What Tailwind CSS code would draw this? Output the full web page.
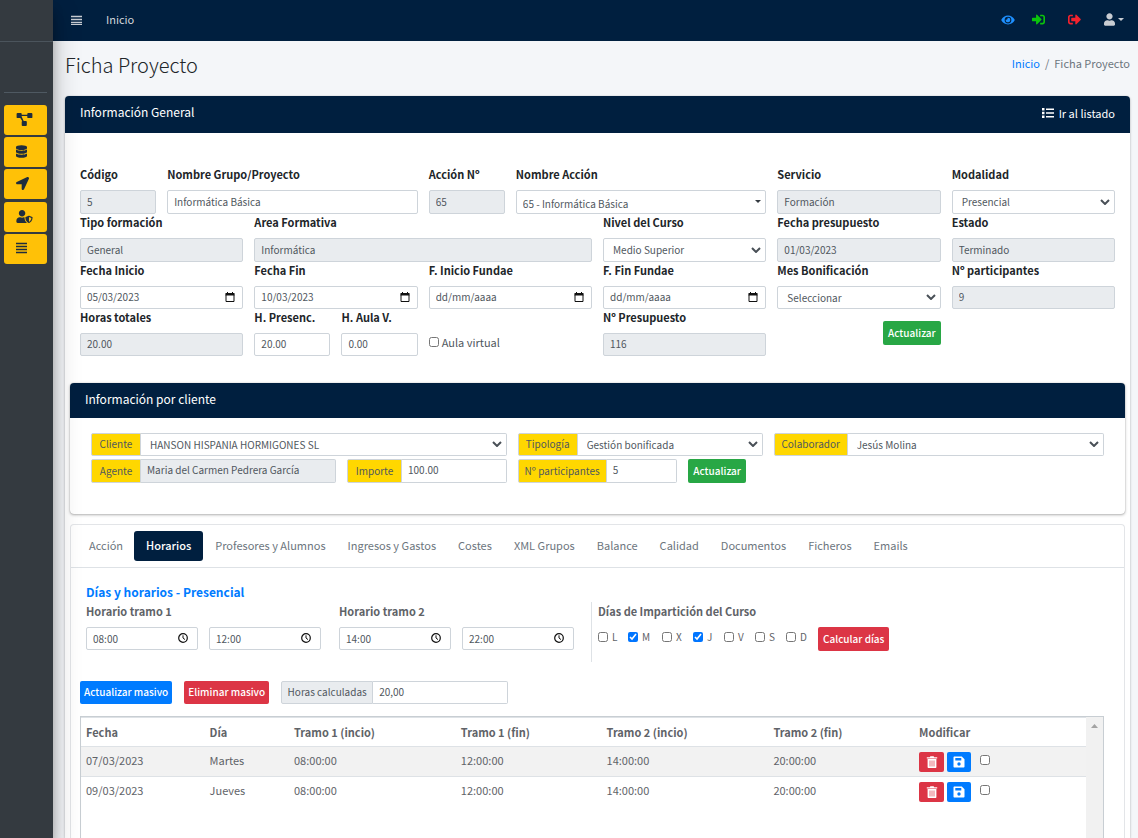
<!DOCTYPE html>
<html lang="es">
<head>
<meta charset="utf-8">
<meta name="viewport" content="width=device-width, initial-scale=1">
<title>Ficha Proyecto</title>
<script src="https://cdn.jsdelivr.net/npm/@tailwindcss/browser@4"></script>
</head>
<body class="flex h-screen overflow-hidden bg-[#f4f6f9] font-['Noto_Sans_CJK_SC','Noto_Sans',sans-serif] text-[11px] leading-[18px] text-[#212529]">

<svg class="hidden" aria-hidden="true">
  <symbol id="chevron" viewBox="0 0 10 6"><path d="M1 1l4 4 4-4" fill="none" stroke="#495057" stroke-width="2"/></symbol>
  <symbol id="calendar" viewBox="0 0 10 10"><path d="M1 2.500h8v7H1z" fill="none" stroke="#111" stroke-width="1"/><path d="M.5 1h9v2.500h-9zM2 0h1v2H2zM7 0h1v2H7z" fill="#111"/></symbol>
  <symbol id="clock" viewBox="0 0 10 10"><circle cx="5" cy="5" r="4.300" fill="none" stroke="#111" stroke-width="1.200"/><path d="M5 2.300V5l2 1.600" fill="none" stroke="#111" stroke-width="1"/></symbol>
  <symbol id="trash" viewBox="0 0 12 12"><path d="M.8 1.200h3L4.400.3h3.200l.6.9h3v1.300H.8z" fill="#fff"/><path d="M1.600 3h8.800v8c0 .6-.4 1-1 1H2.600c-.6 0-1-.4-1-1z" fill="#fff"/><path d="M4 4.500v6M6 4.500v6M8 4.500v6" stroke="#dc3545" stroke-width=".7"/></symbol>
  <symbol id="save" viewBox="0 0 12 12"><path fill="#fff" fill-rule="evenodd" d="M1.500.5h7.300l2.700 2.700v7.300c0 .6-.4 1-1 1h-9c-.6 0-1-.4-1-1v-9c0-.6.4-1 1-1zM2.300 2v2.600h6V2zM6 6.300a1.700 1.700 0 1 0 0 3.400 1.700 1.700 0 0 0 0-3.400z"/></symbol>
</svg>

<aside class="z-20 flex w-[53px] shrink-0 flex-col bg-[#343a40] shadow-[0_14px_28px_rgba(0,0,0,0.25),0_10px_10px_rgba(0,0,0,0.22)]">
  <div class="h-[42px] shrink-0 border-b border-[#4b545c]"></div>
  <div class="mr-[6px] ml-1 h-[51px] shrink-0 border-b border-[#4f5962]"></div>
  <nav class="mt-3 mr-[6px] ml-1 flex flex-col gap-[2px]" aria-label="Menú lateral">
    <button aria-label="Procesos" class="flex h-[30px] items-center rounded-[3px] bg-[#ffc107] pb-[2px] pl-3">
      <svg class="h-[13px] w-[17px]" viewBox="0 0 17 14" fill="#1f2d3d"><path d="M1 0h3.500a1 1 0 0 1 1 1v.8h6V1a1 1 0 0 1 1-1H16a1 1 0 0 1 1 1v3.500a1 1 0 0 1-1 1h-3.500a1 1 0 0 1-1-1v-1.300h-6v.9L7.600 8.500H10a1 1 0 0 1 1 1V13a1 1 0 0 1-1 1H6.500a1 1 0 0 1-1-1V9.500l.5-.9L4 5.500H1a1 1 0 0 1-1-1V1a1 1 0 0 1 1-1z"/></svg>
    </button>
    <button aria-label="Datos" class="flex h-[30px] items-center rounded-[3px] bg-[#ffc107] pb-[2px] pl-3">
      <svg class="h-[13px] w-[11px]" viewBox="0 0 448 512" fill="#1f2d3d"><path d="M448 73.143v45.714C448 159.143 347.667 192 224 192S0 159.143 0 118.857V73.143C0 32.857 100.333 0 224 0s224 32.857 224 73.143zM448 176v102.857C448 319.143 347.667 352 224 352S0 319.143 0 278.857V176c48.125 33.143 136.208 48.572 224 48.572S399.874 209.143 448 176zm0 160v102.857C448 479.143 347.667 512 224 512S0 479.143 0 438.857V336c48.125 33.143 136.208 48.572 224 48.572S399.874 369.143 448 336z"/></svg>
    </button>
    <button aria-label="Ubicación" class="flex h-[30px] items-center rounded-[3px] bg-[#ffc107] pb-[2px] pl-3">
      <svg class="size-[13px]" viewBox="0 0 512 512" fill="#1f2d3d"><path d="M444.520 3.520L28.740 195.420c-47.970 22.390-31.980 92.750 19.190 92.750h175.910v175.910c0 51.170 70.360 67.170 92.750 19.190l191.900-415.780c15.990-38.390-25.590-79.970-63.970-63.970z"/></svg>
    </button>
    <button aria-label="Usuarios" class="mt-px flex h-[30px] items-center rounded-[3px] bg-[#ffc107] pb-[2px] pl-3">
      <svg class="h-[13px] w-[17px]" viewBox="0 0 640 512" fill="#1f2d3d"><path d="M622.300 271.100l-115.200-45c-4.100-1.600-12.600-3.700-22.200 0l-115.200 45c-10.700 4.200-17.700 14-17.700 24.900 0 111.600 68.700 188.800 132.900 213.900 9.600 3.700 18 1.600 22.200 0C558.400 489.900 640 420.500 640 296c0-10.900-7-20.700-17.700-24.900zM496 462.400V273.300l95.500 37.300c-5.600 87.100-60.900 135.400-95.500 151.800zM224 256c70.700 0 128-57.300 128-128S294.700 0 224 0 96 57.300 96 128s57.300 128 128 128zm96 40c0-2.500.8-4.800 1.100-7.200-2.500-.1-4.900-.8-7.500-.8h-16.700c-22.200 10.200-46.900 16-72.900 16s-50.600-5.800-72.900-16h-16.700C60.200 288 0 348.200 0 422.400V464c0 26.500 21.500 48 48 48h352c6.800 0 13.300-1.500 19.200-4-54-42.900-99.200-116.700-99.200-212z"/></svg>
    </button>
    <button aria-label="Listado" class="flex h-[30px] items-center rounded-[3px] bg-[#ffc107] pb-[2px] pl-3">
      <svg class="h-[13px] w-[11px]" viewBox="0 0 11 13" stroke="#1f2d3d" stroke-width="1.300"><path d="M0 1.500h11M0 4.500h11M0 7.500h11M0 10.500h11"/></svg>
    </button>
  </nav>
</aside>

<div class="flex min-w-0 flex-1 flex-col">
  <header class="flex h-[41px] shrink-0 items-center bg-[#001f3f] pr-[14px] pb-[2px] pl-[18px] text-[#c2c7d0]">
    <button aria-label="Menú"><svg class="h-[10px] w-[11px]" viewBox="0 0 11 10" stroke="#c8ccd2" stroke-width="1.600"><path d="M0 1.500h11M0 4.500h11M0 7.500h11"/><path d="M0 9.500h11" stroke-width="1"/></svg></button>
    <a href="#" class="mb-px ml-6 text-[#d3d6db]">Inicio</a>
    <div class="ml-auto flex items-center">
      <a href="#" aria-label="Ver"><svg class="h-3 w-[14px]" viewBox="0 0 576 512" fill="#1e90ff"><path d="M572.520 241.400C518.290 135.590 410.930 64 288 64S57.680 135.640 3.480 241.410a32.350 32.350 0 0 0 0 29.190C57.710 376.410 165.070 448 288 448s230.320-71.640 284.520-177.410a32.350 32.350 0 0 0 0-29.190zM288 400a144 144 0 1 1 144-144 143.930 143.930 0 0 1-144 144zm0-240a95.310 95.310 0 0 0-25.310 3.790 47.850 47.850 0 0 1-66.900 66.900A95.780 95.780 0 1 0 288 160z"/></svg></a>
      <a href="#" aria-label="Entrar" class="ml-[17px]"><svg class="size-[13px]" viewBox="0 0 512 512" fill="#0bc40b"><path d="M416 448h-84c-6.600 0-12-5.400-12-12v-40c0-6.600 5.400-12 12-12h84c17.700 0 32-14.300 32-32V160c0-17.700-14.300-32-32-32h-84c-6.600 0-12-5.400-12-12V76c0-6.600 5.400-12 12-12h84c53 0 96 43 96 96v192c0 53-43 96-96 96zm-47-209L201 71c-15-15-41-4.500-41 17v96H24c-13.300 0-24 10.700-24 24v96c0 13.300 10.700 24 24 24h136v96c0 21.500 26 32 41 17l168-168c9.300-9.400 9.300-24.600 0-34z"/></svg></a>
      <a href="#" aria-label="Salir" class="ml-[23px]"><svg class="size-[13px]" viewBox="0 0 512 512" fill="#f5222d"><path d="M497 273L329 441c-15 15-41 4.500-41-17v-96H152c-13.300 0-24-10.700-24-24v-96c0-13.300 10.700-24 24-24h136V88c0-21.400 25.900-32 41-17l168 168c9.300 9.400 9.300 24.600 0 34zM192 436v-40c0-6.600-5.400-12-12-12H96c-17.700 0-32-14.300-32-32V160c0-17.700 14.300-32 32-32h84c6.600 0 12-5.400 12-12V76c0-6.600-5.400-12-12-12H96c-53 0-96 43-96 96v192c0 53 43 96 96 96h84c6.600 0 12-5.400 12-12z"/></svg></a>
      <button aria-label="Usuario" class="ml-[23px] flex items-center gap-[3px]">
        <svg class="h-[13px] w-[11px]" viewBox="0 0 448 512" fill="#c8ccd2"><path d="M224 256c70.700 0 128-57.300 128-128S294.700 0 224 0 96 57.300 96 128s57.300 128 128 128zm89.600 32h-16.700c-22.200 10.200-46.900 16-72.900 16s-50.600-5.800-72.900-16h-16.700C60.200 288 0 348.200 0 422.400V464c0 26.500 21.500 48 48 48h352c26.500 0 48-21.500 48-48v-41.600c0-74.200-60.200-134.400-134.400-134.400z"/></svg>
        <svg class="h-[3px] w-[6px]" viewBox="0 0 6 3" fill="#c8ccd2"><path d="M0 0h6L3 3z"/></svg>
      </button>
    </div>
  </header>

  <main class="flex min-h-0 flex-1 flex-col pr-2 pl-3">
    <div class="flex h-[55px] shrink-0 justify-between pt-[11px]">
      <h1 class="text-[20px] leading-[26px] font-light">Ficha Proyecto</h1>
      <nav class="flex gap-[5px] pt-[2px] text-[#6c757d]" aria-label="Ruta"><a href="#" class="text-[#007bff]">Inicio</a><span>/</span><span>Ficha Proyecto</span></nav>
    </div>

    <section class="flex min-h-0 flex-1 flex-col rounded-t bg-white shadow-[0_0_1px_rgba(0,0,0,0.3),0_1px_3px_rgba(0,0,0,0.2)]">
      <div class="flex h-[37px] shrink-0 items-center justify-between rounded-t bg-[#001f3f] px-[15px] pb-1 text-white">
        <h2 class="pb-px text-[12px]">Información General</h2>
        <a href="#" class="flex items-center gap-[5px]"><svg class="h-[10px] w-3" viewBox="0 0 12 10" fill="#fff"><path d="M0 0h2.500v2.500H0zM0 3.800h2.500v2.500H0zM0 7.500h2.500V10H0zM4 .5h8V2H4zM4 4.300h8v1.500H4zM4 8h8v1.500H4z"/></svg>Ir al listado</a>
      </div>

      <form class="grid shrink-0 grid-cols-12 gap-x-[11px] px-[15px] pt-[33px] text-[10px] text-[#50575e] [&_input]:pb-[2px]">
        <div class="col-span-1"><label for="cod" class="mb-[7px] block text-[11px] leading-[17px] font-bold whitespace-nowrap text-[#212529]">Código</label><input id="cod" value="5" readonly class="block h-6 w-full rounded-[2px] border border-[#ced4da] bg-[#e9ecef] px-[6px]"></div>
        <div class="col-span-3"><label for="nom" class="mb-[7px] block text-[11px] leading-[17px] font-bold whitespace-nowrap text-[#212529]">Nombre Grupo/Proyecto</label><input id="nom" value="Informática Básica" class="block h-6 w-full rounded-[2px] border border-[#ced4da] bg-white px-[6px]"></div>
        <div class="col-span-1"><label for="acn" class="mb-[7px] block text-[11px] leading-[17px] font-bold whitespace-nowrap text-[#212529]">Acción Nº</label><input id="acn" value="65" readonly class="block h-6 w-full rounded-[2px] border border-[#ced4da] bg-[#e9ecef] px-[6px]"></div>
        <div class="col-span-3"><label for="nac" class="mb-[7px] block text-[11px] leading-[17px] font-bold whitespace-nowrap text-[#212529]">Nombre Acción</label><div class="relative"><select id="nac" class="block h-6 w-full appearance-none rounded-[2px] border border-[#ced4da] bg-white px-[6px] pt-[3px]"><option>65 - Informática Básica</option></select><svg class="pointer-events-none absolute top-[10px] right-[5px] h-[3px] w-[6px]" viewBox="0 0 6 3" fill="#343a40"><path d="M0 0h6L3 3z"/></svg></div></div>
        <div class="col-span-2"><label for="ser" class="mb-[7px] block text-[11px] leading-[17px] font-bold whitespace-nowrap text-[#212529]">Servicio</label><input id="ser" value="Formación" readonly class="block h-6 w-full rounded-[2px] border border-[#ced4da] bg-[#e9ecef] px-[6px]"></div>
        <div class="col-span-2"><label for="mod" class="mb-[7px] block text-[11px] leading-[17px] font-bold whitespace-nowrap text-[#212529]">Modalidad</label><div class="relative"><select id="mod" class="block h-6 w-full appearance-none rounded-[2px] border border-[#ced4da] bg-white px-[9px]"><option>Presencial</option></select><svg class="pointer-events-none absolute top-[9px] right-[5px] h-[6px] w-[10px]"><use href="#chevron"/></svg></div></div>

        <div class="col-span-2"><label for="tip" class="mb-[7px] block text-[11px] leading-[17px] font-bold whitespace-nowrap text-[#212529]">Tipo formación</label><input id="tip" value="General" readonly class="block h-6 w-full rounded-[2px] border border-[#ced4da] bg-[#e9ecef] px-[6px]"></div>
        <div class="col-span-4"><label for="are" class="mb-[7px] block text-[11px] leading-[17px] font-bold whitespace-nowrap text-[#212529]">Area Formativa</label><input id="are" value="Informática" readonly class="block h-6 w-full rounded-[2px] border border-[#ced4da] bg-[#e9ecef] px-[6px]"></div>
        <div class="col-span-2"><label for="niv" class="mb-[7px] block text-[11px] leading-[17px] font-bold whitespace-nowrap text-[#212529]">Nivel del Curso</label><div class="relative"><select id="niv" class="block h-6 w-full appearance-none rounded-[2px] border border-[#ced4da] bg-white px-[9px]"><option>Medio Superior</option></select><svg class="pointer-events-none absolute top-[9px] right-[5px] h-[6px] w-[10px]"><use href="#chevron"/></svg></div></div>
        <div class="col-span-2"><label for="fpr" class="mb-[7px] block text-[11px] leading-[17px] font-bold whitespace-nowrap text-[#212529]">Fecha presupuesto</label><input id="fpr" value="01/03/2023" readonly class="block h-6 w-full rounded-[2px] border border-[#ced4da] bg-[#e9ecef] px-[6px]"></div>
        <div class="col-span-2"><label for="est" class="mb-[7px] block text-[11px] leading-[17px] font-bold whitespace-nowrap text-[#212529]">Estado</label><input id="est" value="Terminado" readonly class="block h-6 w-full rounded-[2px] border border-[#ced4da] bg-[#e9ecef] px-[6px]"></div>

        <div class="col-span-2"><label for="fin" class="mb-[7px] block text-[11px] leading-[17px] font-bold whitespace-nowrap text-[#212529]">Fecha Inicio</label><div class="relative"><input id="fin" value="05/03/2023" class="block h-[23px] w-full rounded-[2px] border border-[#ced4da] bg-white px-[6px]"><svg class="pointer-events-none absolute top-[6px] right-2 size-[10px]"><use href="#calendar"/></svg></div></div>
        <div class="col-span-2"><label for="ffi" class="mb-[7px] block text-[11px] leading-[17px] font-bold whitespace-nowrap text-[#212529]">Fecha Fin</label><div class="relative"><input id="ffi" value="10/03/2023" class="block h-[23px] w-full rounded-[2px] border border-[#ced4da] bg-white px-[6px]"><svg class="pointer-events-none absolute top-[6px] right-2 size-[10px]"><use href="#calendar"/></svg></div></div>
        <div class="col-span-2"><label for="fif" class="mb-[7px] block text-[11px] leading-[17px] font-bold whitespace-nowrap text-[#212529]">F. Inicio Fundae</label><div class="relative"><input id="fif" placeholder="dd/mm/aaaa" class="block h-[23px] w-full rounded-[2px] border border-[#ced4da] bg-white px-[6px] placeholder:text-[#50575e]"><svg class="pointer-events-none absolute top-[6px] right-2 size-[10px]"><use href="#calendar"/></svg></div></div>
        <div class="col-span-2"><label for="fff" class="mb-[7px] block text-[11px] leading-[17px] font-bold whitespace-nowrap text-[#212529]">F. Fin Fundae</label><div class="relative"><input id="fff" placeholder="dd/mm/aaaa" class="block h-[23px] w-full rounded-[2px] border border-[#ced4da] bg-white px-[6px] placeholder:text-[#50575e]"><svg class="pointer-events-none absolute top-[6px] right-2 size-[10px]"><use href="#calendar"/></svg></div></div>
        <div class="col-span-2"><label for="mes" class="mb-[7px] block text-[11px] leading-[17px] font-bold whitespace-nowrap text-[#212529]">Mes Bonificación</label><div class="relative"><select id="mes" class="block h-[23px] w-full appearance-none rounded-[2px] border border-[#ced4da] bg-white px-[9px]"><option>Seleccionar</option></select><svg class="pointer-events-none absolute top-2 right-[5px] h-[6px] w-[10px]"><use href="#chevron"/></svg></div></div>
        <div class="col-span-2"><label for="npa" class="mb-[7px] block text-[11px] leading-[17px] font-bold whitespace-nowrap text-[#212529]">Nº participantes</label><input id="npa" value="9" readonly class="block h-[23px] w-full rounded-[2px] border border-[#ced4da] bg-[#e9ecef] px-[6px]"></div>

        <div class="col-span-2"><label for="hto" class="mb-[7px] block text-[11px] leading-[17px] font-bold whitespace-nowrap text-[#212529]">Horas totales</label><input id="hto" value="20.00" readonly class="block h-[23px] w-full rounded-[2px] border border-[#ced4da] bg-[#e9ecef] px-[6px]"></div>
        <div class="col-span-1"><label for="hpr" class="mb-[7px] block text-[11px] leading-[17px] font-bold whitespace-nowrap text-[#212529]">H. Presenc.</label><input id="hpr" value="20.00" class="block h-[23px] w-full rounded-[2px] border border-[#ced4da] bg-white px-[6px]"></div>
        <div class="col-span-1"><label for="hau" class="mb-[7px] block text-[11px] leading-[17px] font-bold whitespace-nowrap text-[#212529]">H. Aula V.</label><input id="hau" value="0.00" class="block h-[23px] w-full rounded-[2px] border border-[#ced4da] bg-white px-[6px]"></div>
        <label class="col-span-2 flex items-center gap-[3px] pt-[18px] text-[11px]"><input type="checkbox" class="size-[10px]">Aula virtual</label>
        <div class="col-span-2"><label for="npr" class="mb-[7px] block text-[11px] leading-[17px] font-bold whitespace-nowrap text-[#212529]">Nº Presupuesto</label><input id="npr" value="116" readonly class="block h-[23px] w-full rounded-[2px] border border-[#ced4da] bg-[#e9ecef] px-[6px]"></div>
        <div class="col-span-2 flex items-start justify-end pt-3"><button type="button" class="h-6 rounded-[2px] bg-[#28a745] px-[5px] pb-px font-medium text-white">Actualizar</button></div>
      </form>

      <section class="mx-[5px] mt-[27px] h-[131px] shrink-0 rounded bg-white shadow-[0_0_1px_rgba(0,0,0,0.3),0_1px_3px_rgba(0,0,0,0.3)]">
        <div class="flex h-[35px] items-center rounded-t bg-[#001f3f] px-[15px] text-white"><h2 class="pb-1 text-[12px]">Información por cliente</h2></div>
        <form class="grid grid-cols-12 gap-x-[11px] gap-y-[3px] px-[21px] pt-[15px] text-[10px] text-[#50575e] [&_input]:pb-[2px] [&_label]:pb-px">
          <div class="relative col-span-5 flex h-[23px]"><label for="cli" class="flex w-[50px] items-center justify-center rounded-l-[2px] border border-[#ced4da] bg-[#ffd700]">Cliente</label><select id="cli" class="min-w-0 flex-1 appearance-none rounded-r-[2px] border border-l-0 border-[#ced4da] bg-white px-[9px]"><option>HANSON HISPANIA HORMIGONES SL</option></select><svg class="pointer-events-none absolute top-2 right-[5px] h-[6px] w-[10px]"><use href="#chevron"/></svg></div>
          <div class="relative col-span-3 flex h-[23px]"><label for="tpl" class="flex w-[60px] items-center justify-center rounded-l-[2px] border border-[#ced4da] bg-[#ffd700]">Tipología</label><select id="tpl" class="min-w-0 flex-1 appearance-none rounded-r-[2px] border border-l-0 border-[#ced4da] bg-white px-[9px]"><option>Gestión bonificada</option></select><svg class="pointer-events-none absolute top-2 right-[5px] h-[6px] w-[10px]"><use href="#chevron"/></svg></div>
          <div class="relative col-span-4 flex h-[23px]"><label for="col" class="flex w-[74px] items-center justify-center rounded-l-[2px] border border-[#ced4da] bg-[#ffd700]">Colaborador</label><select id="col" class="min-w-0 flex-1 appearance-none rounded-r-[2px] border border-l-0 border-[#ced4da] bg-white px-[9px]"><option>Jesús Molina</option></select><svg class="pointer-events-none absolute top-2 right-[5px] h-[6px] w-[10px]"><use href="#chevron"/></svg></div>
          <div class="col-span-3 flex h-6"><label for="age" class="flex w-[50px] items-center justify-center rounded-l-[2px] border border-[#ced4da] bg-[#ffd700]">Agente</label><input id="age" readonly value="Maria del Carmen Pedrera García" class="min-w-0 flex-1 rounded-r-[2px] border border-l-0 border-[#ced4da] bg-[#e9ecef] px-[6px]"></div>
          <div class="col-span-2 flex h-6"><label for="imp" class="flex w-[55px] items-center justify-center rounded-l-[2px] border border-[#ced4da] bg-[#ffd700]">Importe</label><input id="imp" value="100.00" class="min-w-0 flex-1 rounded-r-[2px] border border-l-0 border-[#ced4da] bg-white px-[6px]"></div>
          <div class="col-span-2 flex h-6"><label for="np2" class="flex w-[89px] items-center justify-center rounded-l-[2px] border border-[#ced4da] bg-[#ffd700] whitespace-nowrap">Nº participantes</label><input id="np2" value="5" class="min-w-0 flex-1 rounded-r-[2px] border border-l-0 border-[#ced4da] bg-white px-[6px]"></div>
          <div class="col-span-2"><button type="button" class="h-6 rounded-[2px] bg-[#28a745] px-[5px] pb-px font-medium text-white">Actualizar</button></div>
        </form>
      </section>

      <section class="mx-[5px] mt-[10px] flex min-h-0 flex-1 flex-col rounded-t border border-b-0 border-[#e3e5e8] bg-white text-[#5f6368]">
        <nav class="flex h-[43px] shrink-0 items-center border-b border-[#dee2e6] px-[7px] text-[#6c757d]" aria-label="Secciones">
          <a href="#" class="px-[11px] pb-[3px]">Acción</a>
          <a href="#" class="mr-px mb-px flex h-[30px] items-center rounded-[3px] bg-[#001f3f] px-3 pb-[2px] font-medium text-white">Horarios</a>
          <a href="#" class="px-[11px] pb-[3px]">Profesores y Alumnos</a>
          <a href="#" class="px-[11px] pb-[3px]">Ingresos y Gastos</a>
          <a href="#" class="px-[11px] pb-[3px]">Costes</a>
          <a href="#" class="px-[11px] pb-[3px]">XML Grupos</a>
          <a href="#" class="px-[11px] pb-[3px]">Balance</a>
          <a href="#" class="px-[11px] pb-[3px]">Calidad</a>
          <a href="#" class="px-[11px] pb-[3px]">Documentos</a>
          <a href="#" class="px-[11px] pb-[3px]">Ficheros</a>
          <a href="#" class="px-[11px] pb-[3px]">Emails</a>
        </nav>

        <div class="shrink-0 px-[15px] pt-[15px]">
          <h3 class="mb-px text-[12px] font-bold text-[#007bff]">Días y horarios - Presencial</h3>
          <div class="flex">
            <fieldset class="w-[235px] pt-px"><legend class="mb-[6px] font-bold">Horario tramo 1</legend>
              <div class="flex gap-[11px] text-[10px] text-[#50575e] [&_input]:pb-px">
                <div class="relative flex-1"><input aria-label="Tramo 1 inicio" value="08:00" class="block h-[23px] w-full rounded-[2px] border border-[#ced4da] bg-white px-[6px]"><svg class="pointer-events-none absolute top-[6px] right-[10px] size-[10px]"><use href="#clock"/></svg></div>
                <div class="relative flex-1"><input aria-label="Tramo 1 fin" value="12:00" class="block h-[23px] w-full rounded-[2px] border border-[#ced4da] bg-white px-[6px]"><svg class="pointer-events-none absolute top-[6px] right-[10px] size-[10px]"><use href="#clock"/></svg></div>
              </div>
            </fieldset>
            <fieldset class="ml-[18px] w-[235px] pt-px"><legend class="mb-[6px] font-bold">Horario tramo 2</legend>
              <div class="flex gap-[11px] text-[10px] text-[#50575e] [&_input]:pb-px">
                <div class="relative flex-1"><input aria-label="Tramo 2 inicio" value="14:00" class="block h-[23px] w-full rounded-[2px] border border-[#ced4da] bg-white px-[6px]"><svg class="pointer-events-none absolute top-[6px] right-[10px] size-[10px]"><use href="#clock"/></svg></div>
                <div class="relative flex-1"><input aria-label="Tramo 2 fin" value="22:00" class="block h-[23px] w-full rounded-[2px] border border-[#ced4da] bg-white px-[6px]"><svg class="pointer-events-none absolute top-[6px] right-[10px] size-[10px]"><use href="#clock"/></svg></div>
              </div>
            </fieldset>
            <fieldset class="ml-[17px] h-[60px] border-l border-[#dee2e6] pl-[6px]"><legend class="contents"><span class="block font-bold">Días de Impartición del Curso</span></legend>
              <div class="mt-[7px] flex items-start text-[10px] [&_label]:pt-px">
                <label class="flex w-[30px] items-center gap-1"><input type="checkbox" class="size-[10px]">L</label>
                <label class="flex w-[34px] items-center gap-1"><input type="checkbox" checked class="size-[10px] accent-[#0075ff]">M</label>
                <label class="flex w-[31px] items-center gap-1"><input type="checkbox" class="size-[10px]">X</label>
                <label class="flex w-[31px] items-center gap-1"><input type="checkbox" checked class="size-[10px] accent-[#0075ff]">J</label>
                <label class="flex w-[31px] items-center gap-1"><input type="checkbox" class="size-[10px]">V</label>
                <label class="flex w-[31px] items-center gap-1"><input type="checkbox" class="size-[10px]">S</label>
                <label class="flex w-8 items-center gap-1"><input type="checkbox" class="size-[10px]">D</label>
                <button type="button" class="h-6 rounded-[2px] bg-[#dc3545] px-[5px] pb-px font-medium text-white">Calcular días</button>
              </div>
            </fieldset>
          </div>
        </div>

        <div class="mt-[19px] flex h-[23px] shrink-0 gap-3 px-[9px] text-[10px]">
          <button type="button" class="rounded-[2px] bg-[#007bff] px-1 pb-px font-medium text-white">Actualizar masivo</button>
          <button type="button" class="rounded-[2px] bg-[#dc3545] px-1 pb-px font-medium text-white">Eliminar masivo</button>
          <div class="flex w-[227px] text-[#50575e]"><label for="hca" class="flex w-[92px] items-center justify-center rounded-l-[2px] border border-[#ced4da] bg-[#e9ecef] pb-px whitespace-nowrap">Horas calculadas</label><input id="hca" value="20,00" class="min-w-0 flex-1 rounded-r-[2px] border border-l-0 border-[#ced4da] bg-white px-[6px] pb-px"></div>
        </div>

        <div class="mt-3 mr-5 ml-[9px] flex min-h-0 flex-1 border border-b-0 border-[#c8ced3]">
          <div class="min-w-0 flex-1">
            <table class="w-full table-fixed border-t border-[#dee2e6] text-left">
              <colgroup><col class="w-[12.3%]"><col class="w-[8.4%]"><col class="w-[16.6%]"><col class="w-[14.5%]"><col class="w-[16.6%]"><col class="w-[14.5%]"><col></colgroup>
              <thead><tr class="h-[29px]"><th class="px-[5px] pb-px">Fecha</th><th class="px-[5px] pb-px">Día</th><th class="px-[5px] pb-px">Tramo 1 (incio)</th><th class="px-[5px] pb-px">Tramo 1 (fin)</th><th class="px-[5px] pb-px">Tramo 2 (incio)</th><th class="px-[5px] pb-px">Tramo 2 (fin)</th><th class="px-[5px] pb-px">Modificar</th></tr></thead>
              <tbody>
                <tr class="h-[30px] border-t border-[#dee2e6] bg-[#f2f2f2]"><td class="px-[5px] pb-[3px]">07/03/2023</td><td class="px-[5px] pb-[3px]">Martes</td><td class="px-[5px] pb-[3px]">08:00:00</td><td class="px-[5px] pb-[3px]">12:00:00</td><td class="px-[5px] pb-[3px]">14:00:00</td><td class="px-[5px] pb-[3px]">20:00:00</td>
                  <td class="px-[5px]"><div class="flex items-center"><button aria-label="Eliminar" class="flex h-5 w-[25px] items-center justify-center rounded-[2px] bg-[#dc3545]"><svg class="size-3"><use href="#trash"/></svg></button><button aria-label="Guardar" class="ml-[3px] flex h-5 w-6 items-center justify-center rounded-[2px] bg-[#007bff]"><svg class="size-3"><use href="#save"/></svg></button><input type="checkbox" aria-label="Seleccionar 07/03/2023" class="mb-[3px] ml-[9px] size-[10px]"></div></td></tr>
                <tr class="h-[30px] border-t border-[#dee2e6]"><td class="px-[5px] pb-[3px]">09/03/2023</td><td class="px-[5px] pb-[3px]">Jueves</td><td class="px-[5px] pb-[3px]">08:00:00</td><td class="px-[5px] pb-[3px]">12:00:00</td><td class="px-[5px] pb-[3px]">14:00:00</td><td class="px-[5px] pb-[3px]">20:00:00</td>
                  <td class="px-[5px]"><div class="flex items-center"><button aria-label="Eliminar" class="flex h-5 w-[25px] items-center justify-center rounded-[2px] bg-[#dc3545]"><svg class="size-3"><use href="#trash"/></svg></button><button aria-label="Guardar" class="ml-[3px] flex h-5 w-6 items-center justify-center rounded-[2px] bg-[#007bff]"><svg class="size-3"><use href="#save"/></svg></button><input type="checkbox" aria-label="Seleccionar 09/03/2023" class="mb-[3px] ml-[9px] size-[10px]"></div></td></tr>
              </tbody>
            </table>
          </div>
          <div class="flex w-[17px] shrink-0 justify-center bg-[#f1f1f1] pt-[7px]"><svg class="h-1 w-[7px]" viewBox="0 0 7 4" fill="#a3a3a3"><path d="M0 4h7L3.500 0z"/></svg></div>
        </div>
      </section>
    </section>
  </main>
</div>
</body>
</html>
